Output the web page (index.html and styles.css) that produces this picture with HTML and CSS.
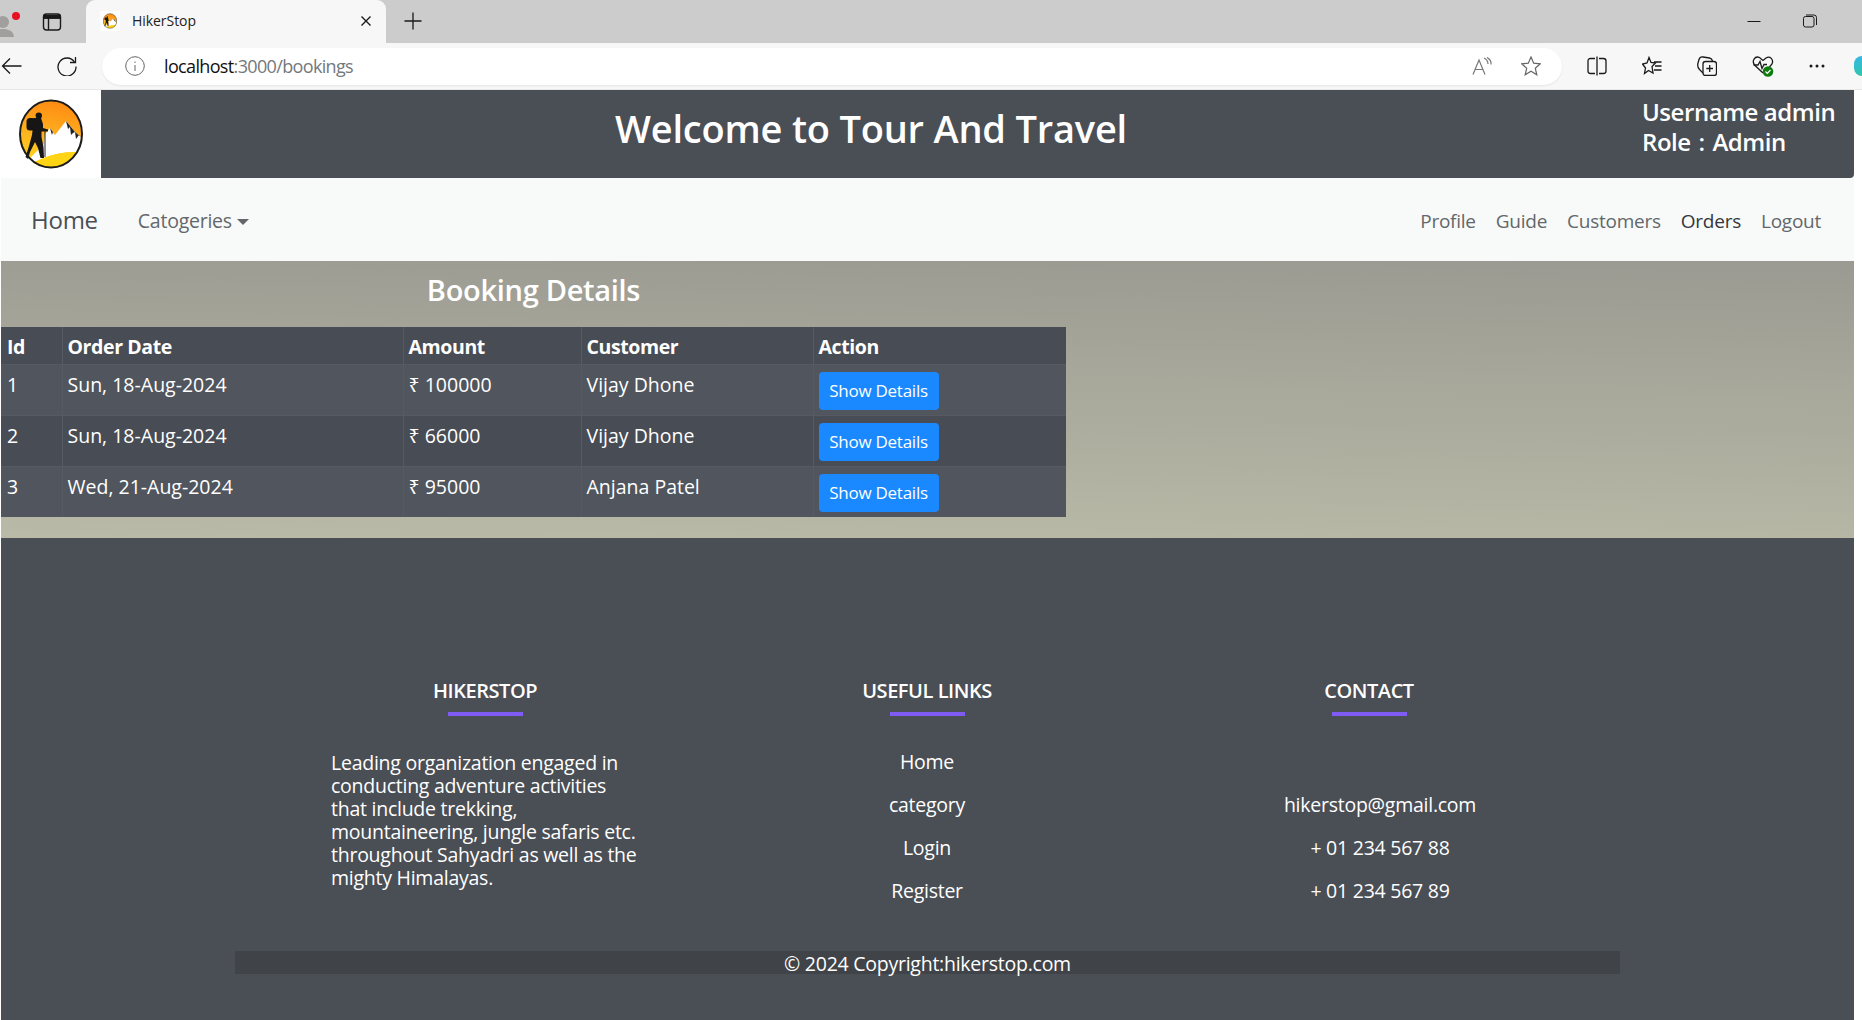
FILE: index.html
```html
<!DOCTYPE html>
<html lang="en">
<head>
    <meta charset="UTF-8">
    <title>HikerStop</title>
    <link rel="stylesheet" href="styles.css">
</head>
<body>
<svg class="defs" width="0" height="0">
    <defs>
        <linearGradient id="sun" x1="0.6" y1="0" x2="0.4" y2="1">
            <stop offset="0" stop-color="#ff8a12"/>
            <stop offset="0.55" stop-color="#fdb320"/>
            <stop offset="1" stop-color="#ffd81a"/>
        </linearGradient>
        <symbol id="logo" viewBox="0 0 64 70">
            <ellipse cx="32" cy="35" rx="31" ry="33.5" fill="url(#sun)"/>
            <path d="M10 60 L19 51 L25 45 L26 35 L31 29 L36 36 L47 22 L56 33 L62 38 C62 44 60 49 57 53 C44 53 28 56 14 64 Z" fill="#fff"/>
            <path d="M31 29 L33 36 L34 33 L36 36 Z M47 22 L49 30 L51 28 L52 36 L54 34 L56 33 Z M56 33 L57 40 L60 36 L62 38 Z" fill="#222"/>
            <circle cx="19.800" cy="16.600" r="3.200" fill="#161616"/>
            <rect x="7.500" y="19" width="9.500" height="12.500" rx="3.500" fill="#161616"/>
            <path d="M15 19 L22 19 L24 25 L24 29 L29 30.500 L29 32.500 L22.500 32.500 L22.500 38 L24.500 48 L25 59 L21.500 59 L19 49 L16 43 L11 53 L9 60 L6.500 58 L10 47 L13 36 Z" fill="#161616"/>
            <path d="M26 31 L26 58" stroke="#222" stroke-width="1"/>
            <path d="M14 64 C28 56 44 53 57 53 C52 62 42 67.500 32 67.500 C25 67.500 19 66 14 64 Z" fill="#ffd414"/>
            <ellipse cx="32" cy="35" rx="31" ry="33.5" fill="none" stroke="#1c1c1c" stroke-width="2"/>
        </symbol>
    </defs>
</svg>

<div class="tabstrip">
    <div class="profile">
        <svg width="20" height="32" viewBox="0 0 20 32">
            <circle cx="3" cy="17" r="6" fill="#a19f9d"/>
            <path d="M-8 33 c0-7 5-9 11-9 s11 2 11 9 Z" fill="#a19f9d"/>
            <circle cx="16" cy="11" r="4" fill="#e81123"/>
        </svg>
    </div>
    <svg class="tab-actions" width="20" height="20" viewBox="0 0 20 20" fill="none" stroke="#1a1a1a" stroke-width="1.400">
        <rect x="1.500" y="2" width="17" height="16" rx="3"/>
        <path d="M1.500 6 h17 M6.500 6 v12" />
        <path d="M2 3.500 h16 v2.500 h-16 Z" fill="#1a1a1a"/>
    </svg>
    <div class="tab">
        <span class="favicon"><svg width="14" height="16"><use href="#logo"/></svg></span>
        <span class="tab-title">HikerStop</span>
        <svg class="tab-close" width="12" height="12" viewBox="0 0 12 12" stroke="#1a1a1a" stroke-width="1.400"><path d="M1.500 1.500 L10.500 10.500 M10.500 1.500 L1.500 10.500"/></svg>
    </div>
    <svg class="new-tab" width="18" height="18" viewBox="0 0 18 18" stroke="#1a1a1a" stroke-width="1.300"><path d="M9 0.500 V17.500 M0.500 9 H17.500"/></svg>
    <div class="win-controls">
        <svg width="14" height="14" viewBox="0 0 14 14" stroke="#1a1a1a" stroke-width="1"><path d="M0.500 7.500 H13.500"/></svg>
        <svg width="14" height="14" viewBox="0 0 14 14" fill="none" stroke="#1a1a1a" stroke-width="1"><rect x="0.500" y="2.500" width="10.500" height="10.500" rx="2"/><path d="M3 1 H11 Q13.500 1 13.500 3.500 V11"/></svg>
    </div>
</div>

<div class="toolbar">
    <svg class="tool-back" width="21" height="18" viewBox="0 0 21 18" fill="none" stroke="#1a1a1a" stroke-width="1.300"><path d="M20.500 9 H1.500 M9 1.500 L1.500 9 L9 16.500"/></svg>
    <svg class="tool-reload" width="20" height="20" viewBox="0 0 20 20" fill="none" stroke="#1a1a1a" stroke-width="1.300"><path d="M17.500 6 A9 9 0 1 0 19 10.500"/><path d="M18.500 1 V6.500 H13"/></svg>
    <div class="address">
        <svg width="20" height="20" viewBox="0 0 20 20" fill="none" stroke="#666"><circle cx="10" cy="10" r="9.300"/><path d="M10 9 V15 M10 5.500 V7"/></svg>
        <span class="url"><b>localhost</b>:3000/bookings</span>
        <svg class="read-aloud" width="20" height="18" viewBox="0 0 20 18" fill="none" stroke="#777" stroke-width="1.200"><path d="M1 17.500 L7 3 L13 17.500 M3 12.500 H11"/><path d="M12 1 Q16 3 16 7 M15 0.500 Q19.500 3 19 7.500"/></svg>
        <svg class="fav-star" width="20" height="20" viewBox="0 0 20 20" fill="none" stroke="#666" stroke-width="1.200"><path d="M10 1 L12.700 7.200 L19.300 7.800 L14.300 12.200 L15.800 18.800 L10 15.300 L4.200 18.800 L5.700 12.200 L0.700 7.800 L7.300 7.200 Z"/></svg>
    </div>
    <div class="tool-icons">
        <svg width="20" height="20" viewBox="0 0 20 20" fill="none" stroke="#1a1a1a" stroke-width="1.300"><path d="M8 2.500 H3.500 Q1 2.500 1 5 V15 Q1 17.500 3.500 17.500 H8 M12 2.500 H16.500 Q19 2.500 19 5 V15 Q19 17.500 16.500 17.500 H12 M10 0.500 V19.500"/></svg>
        <svg width="20" height="20" viewBox="0 0 20 20" fill="none" stroke="#1a1a1a" stroke-width="1.300"><path d="M7 1.500 L9 6.500 L13.500 7 L10 10.500 L11 17 L6.500 14.500 L2.500 17.500 L3.500 12 L0.500 8 L5 7 Z"/><path d="M12 6 H19.500 M13 10 H19.500 M12 14 H19.500"/></svg>
        <svg width="20" height="20" viewBox="0 0 20 20" fill="none" stroke="#1a1a1a" stroke-width="1.300"><rect x="6" y="5.500" width="13.500" height="14" rx="2.500"/><path d="M12.700 9 V16 M9.300 12.500 H16"/><path d="M6 17 L2.500 13.500 Q0 11 1 7 L2 3.500 Q3 0.500 6 1 L12.500 2 Q15 2.500 15.500 5"/></svg>
        <span class="health">
            <svg width="22" height="21" viewBox="0 0 22 21" fill="none" stroke="#1a1a1a" stroke-width="1.300"><path d="M11 17 L3 9.500 C-1 5 3 -0.500 7.500 1.500 L11 4.500 L14 2 C18 -0.500 22 3.500 20 8 L17.500 11"/><path d="M1.500 9 H6 L8 5.500 L10 12.500 L12 8.500 H15"/><circle cx="16" cy="15.500" r="5.300" fill="#107c10" stroke="none"/><path d="M13.500 15.500 L15.300 17.300 L18.500 14" stroke="#fff" stroke-width="1.200"/></svg>
        </span>
        <svg width="16" height="4" viewBox="0 0 16 4" fill="#1a1a1a"><circle cx="2" cy="2" r="1.500"/><circle cx="8" cy="2" r="1.500"/><circle cx="14" cy="2" r="1.500"/></svg>
    </div>
    <div class="copilot"></div>
</div>

<div class="page">
    <header class="top-header">
        <div class="logo-box">
            <svg width="64" height="70"><use href="#logo"/></svg>
        </div>
        <div class="top-bar">
            <h1 class="site-title">Welcome to Tour And Travel</h1>
            <div class="user-info">
                <div>Username admin</div>
                <div class="user-role">Role : Admin</div>
            </div>
        </div>
    </header>

    <nav class="navbar">
        <a class="brand">Home</a>
        <a class="nav-link dropdown">Catogeries<span class="caret"></span></a>
        <div class="nav-right">
            <a class="nav-link">Profile</a>
            <a class="nav-link">Guide</a>
            <a class="nav-link">Customers</a>
            <a class="nav-link active">Orders</a>
            <a class="nav-link">Logout</a>
        </div>
    </nav>

    <main class="content">
        <div class="bookings">
            <h3 class="bookings-title">Booking Details</h3>
            <table class="booking-table">
                <thead>
                <tr>
                    <th class="col-id">Id</th>
                    <th class="col-date">Order Date</th>
                    <th class="col-amount">Amount</th>
                    <th class="col-customer">Customer</th>
                    <th>Action</th>
                </tr>
                </thead>
                <tbody>
                <tr>
                    <td>1</td>
                    <td>Sun, 18-Aug-2024</td>
                    <td>₹ 100000</td>
                    <td>Vijay Dhone</td>
                    <td><button class="btn-details">Show Details</button></td>
                </tr>
                <tr>
                    <td>2</td>
                    <td>Sun, 18-Aug-2024</td>
                    <td>₹ 66000</td>
                    <td>Vijay Dhone</td>
                    <td><button class="btn-details">Show Details</button></td>
                </tr>
                <tr>
                    <td>3</td>
                    <td>Wed, 21-Aug-2024</td>
                    <td>₹ 95000</td>
                    <td>Anjana Patel</td>
                    <td><button class="btn-details">Show Details</button></td>
                </tr>
                </tbody>
            </table>
        </div>
    </main>

    <footer class="footer">
        <div class="footer-cols">
            <section class="footer-col">
                <h5 class="footer-head">HIKERSTOP</h5>
                <div class="footer-line"></div>
                <p class="footer-about">Leading organization engaged in<br>conducting adventure activities<br>that include trekking,<br>mountaineering, jungle safaris etc.<br>throughout Sahyadri as well as the<br>mighty Himalayas.</p>
            </section>
            <section class="footer-col">
                <h5 class="footer-head">USEFUL LINKS</h5>
                <div class="footer-line"></div>
                <ul class="footer-list">
                    <li>Home</li>
                    <li>category</li>
                    <li>Login</li>
                    <li>Register</li>
                </ul>
            </section>
            <section class="footer-col">
                <h5 class="footer-head">CONTACT</h5>
                <div class="footer-line"></div>
                <ul class="footer-list contact">
                    <li></li>
                    <li>hikerstop@gmail.com</li>
                    <li>+ 01 234 567 88</li>
                    <li>+ 01 234 567 89</li>
                </ul>
            </section>
        </div>
        <div class="copyright">© 2024 Copyright:hikerstop.com</div>
    </footer>
</div>
</body>
</html>
```

FILE: styles.css
```css
* {
    box-sizing: border-box;
}

body {
    margin: 0;
    background-color: #fff;
    font-family: "Open Sans", "Noto Sans", sans-serif;
    font-size: 19.500px;
    letter-spacing: -0.25px;
    color: #fff;
    overflow: hidden;
}

.defs {
    display: block;
    height: 0;
}

/* browser chrome */
.tabstrip {
    display: flex;
    align-items: center;
    height: 43px;
    background-color: #cccccc;
}

.profile {
    display: flex;
    width: 42px;
    height: 43px;
    padding-top: 5px;
}

.tab-actions {
    margin-right: 24px;
}

.tab {
    display: flex;
    align-items: center;
    align-self: flex-end;
    width: 300px;
    height: 43px;
    padding: 0 14px 2px 14px;
    background-color: #f7f7f7;
    border-radius: 9px 9px 0 0;
    color: #222;
    font-size: 14px;
    letter-spacing: -0.05px;
}

.favicon {
    display: flex;
    justify-content: center;
    align-items: center;
    width: 20px;
    height: 20px;
    background: #fff;
    margin-right: 12px;
}

.tab-close {
    margin-left: auto;
}

.new-tab {
    margin: 0 0 2px 18px;
}

.win-controls {
    display: flex;
    gap: 42px;
    margin: 0 45px 2px auto;
}

.toolbar {
    display: flex;
    align-items: center;
    height: 47px;
    background-color: #f7f7f7;
    border-bottom: 1px solid #e8e8e8;
}

.tool-back {
    margin-left: 1px;
}

.tool-reload {
    margin-left: 35px;
}

.address {
    display: flex;
    align-items: center;
    width: 1460px;
    height: 37px;
    margin-left: 25px;
    padding: 0 21px 0 23px;
    background-color: #fff;
    border-radius: 19px;
    box-shadow: 0 1px 2px rgba(0, 0, 0, 0.08);
}

.url {
    margin-left: 19px;
    font-size: 18px;
    letter-spacing: -0.65px;
    color: #74787d;
}

.url b {
    font-weight: 400;
    color: #111;
}

.read-aloud {
    margin-left: auto;
}

.fav-star {
    margin-left: 29px;
}

.tool-icons {
    display: flex;
    align-items: center;
    gap: 35px;
    margin-left: 25px;
}

.health {
    display: flex;
}

.copilot {
    width: 8px;
    height: 20px;
    margin-left: auto;
    border-radius: 10px 0 0 10px;
    background: linear-gradient(160deg, #37b6e8, #2fc6a8);
}

/* page */
.page {
    width: 1854px;
    padding-left: 1px;
}

.top-header {
    display: flex;
    height: 88px;
    margin-left: -1px;
}

.logo-box {
    display: flex;
    justify-content: center;
    align-items: flex-start;
    width: 101px;
    padding: 9px 0 0 1px;
}

.top-bar {
    display: flex;
    flex: 1;
    background-color: #4a4e55;
    border-radius: 0 0 4px 0;
}

.site-title {
    flex: 1;
    margin: 0;
    padding-top: 14px;
    text-align: center;
    font-size: 38px;
    font-weight: 600;
    line-height: 48px;
    letter-spacing: -0.2px;
}

.user-info {
    width: 213px;
    padding: 7px 0 0 1px;
    font-size: 24px;
    font-weight: 600;
    line-height: 30px;
    letter-spacing: -0.45px;
}

.user-role {
    word-spacing: 2px;
}

.navbar {
    display: flex;
    align-items: center;
    height: 83px;
    padding: 0 21px 0 30px;
    background-color: #f8faf9;
}

.brand {
    margin-right: 40px;
    font-size: 24px;
    color: #494f55;
}

.nav-link {
    padding-top: 2px;
    font-size: 19.500px;
    color: #63676b;
}

.nav-link.active {
    color: #33373b;
}

.caret {
    display: inline-block;
    margin-left: 5px;
    vertical-align: 3px;
    border-top: 6px solid #63676b;
    border-left: 6px solid transparent;
    border-right: 6px solid transparent;
}

.nav-right {
    display: flex;
    gap: 20px;
    margin-left: auto;
    padding-right: 12px;
}

.nav-right .nav-link {
    font-size: 19px;
}

.content {
    height: 277px;
    background: linear-gradient(181deg, #9b9a92 0%, #b9baa7 100%);
}

.bookings {
    width: 1065px;
}

.bookings-title {
    margin: 0;
    height: 66px;
    padding-top: 9px;
    text-align: center;
    font-size: 29px;
    font-weight: 600;
    line-height: 40px;
    letter-spacing: -0.3px;
}

.booking-table {
    width: 100%;
    border-collapse: collapse;
    table-layout: fixed;
    background-color: #484c54;
    font-size: 19.500px;
    letter-spacing: 0;
}

.booking-table th,
.booking-table td {
    padding: 5px;
    border: 1px solid #565a62;
    text-align: left;
    vertical-align: top;
    line-height: 30px;
}

.booking-table thead th {
    height: 37px;
    padding-bottom: 0;
    border-top: 0;
    font-weight: 700;
    letter-spacing: -0.4px;
}

.booking-table tr > :first-child {
    border-left: 0;
    padding-left: 6px;
}

.booking-table tr > :last-child {
    border-right: 0;
}

.booking-table tbody tr:last-child td {
    border-bottom: 0;
}

.booking-table tbody tr:nth-child(odd) {
    background-color: #51555d;
}

.col-id {
    width: 61px;
}

.col-date {
    width: 341px;
}

.col-amount {
    width: 178px;
}

.col-customer {
    width: 232px;
}

.btn-details {
    display: block;
    width: 120px;
    height: 38px;
    margin-top: 2px;
    padding: 0;
    border: none;
    border-radius: 4px;
    background-color: #1a88ff;
    color: #fff;
    font-family: inherit;
    font-size: 17px;
    letter-spacing: -0.25px;
}

.footer {
    height: 482px;
    padding-top: 141px;
    background-color: #4a4e55;
}

.footer-cols {
    display: grid;
    grid-template-columns: repeat(3, 442px);
    justify-content: center;
    margin-right: 1px;
}

.footer-col {
    display: flex;
    flex-direction: column;
    align-items: center;
}

.footer-head {
    margin: 0;
    font-size: 20px;
    font-weight: 600;
    line-height: 24px;
    letter-spacing: -0.45px;
}

.footer-line {
    width: 75px;
    height: 4px;
    margin-top: 9px;
    background-color: #7e5bf2;
}

.footer-about {
    width: 308px;
    margin: 35px 0 0;
    line-height: 23px;
    white-space: nowrap;
}

.footer-list {
    margin: 34px 0 0;
    padding: 0;
    list-style: none;
    text-align: center;
}

.footer-list li {
    height: 24px;
    margin-bottom: 19px;
    line-height: 24px;
}

.footer-list.contact {
    padding-left: 22px;
}

.copyright {
    width: 1385px;
    height: 23px;
    margin: 29px auto 0;
    background-color: #404348;
    text-align: center;
    line-height: 26px;
}
```
